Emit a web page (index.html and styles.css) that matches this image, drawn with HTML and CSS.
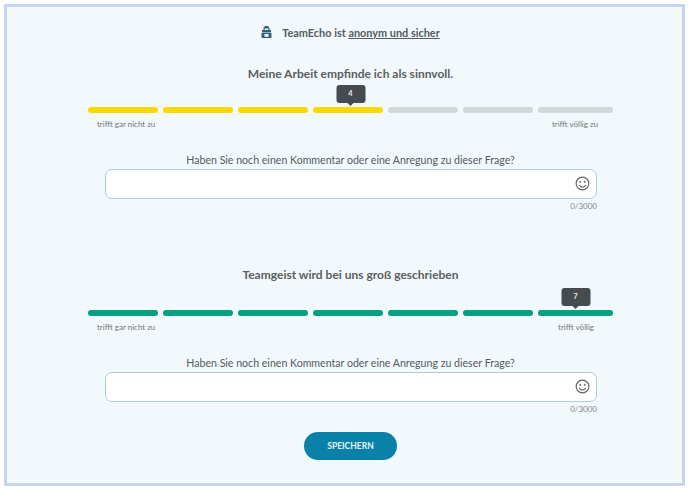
FILE: index.html
```html
<!DOCTYPE html>
<html lang="de">
<head>
<meta charset="utf-8">
<title>TeamEcho</title>
<link rel="stylesheet" href="styles.css">
</head>
<body>
<main class="frame">
  <p class="notice">
    <svg class="lock" viewBox="0 0 11 12" width="11" height="12"><path fill="#2f5f7c" d="M3.500 0h4v1.200l1 .8V4H10v2.500H1V4h1.500V2l1-.8zM3.700 2.400V4h3.600V2.400zM.5 7h10v4.200a.8.8 0 0 1-.8.8H1.300a.8.8 0 0 1-.8-.8zM3.500 8v2.800h4V8z"/></svg>
    <span>TeamEcho ist <a href="#">anonym und sicher</a></span>
  </p>

  <section class="question">
    <h2>Meine Arbeit empfinde ich als sinnvoll.</h2>
    <div class="scale">
      <div class="seg on-y"></div><div class="seg on-y"></div><div class="seg on-y"></div>
      <div class="seg on-y"><span class="tip shift">4</span></div>
      <div class="seg"></div><div class="seg"></div><div class="seg last"></div>
    </div>
    <div class="labels"><span>trifft gar nicht zu</span><span class="end-a">trifft völlig zu</span></div>
    <label class="ask">Haben Sie noch einen Kommentar oder eine Anregung zu dieser Frage?</label>
    <div class="field">
      <svg class="smile" viewBox="0 0 16 16" width="15" height="15"><circle cx="8" cy="8" r="6.800" fill="none" stroke="#5f6466" stroke-width="1.200"/><circle cx="5.600" cy="6.300" r="1" fill="#5f6466"/><circle cx="10.400" cy="6.300" r="1" fill="#5f6466"/><path d="M4.500 9.600c.8 1.500 2 2.200 3.500 2.200s2.700-.7 3.500-2.200" fill="none" stroke="#5f6466" stroke-width="1.200"/></svg>
    </div>
    <div class="count">0/3000</div>
  </section>

  <section class="question second">
    <h2>Teamgeist wird bei uns groß geschrieben</h2>
    <div class="scale">
      <div class="seg on-g"></div><div class="seg on-g"></div><div class="seg on-g"></div>
      <div class="seg on-g"></div><div class="seg on-g"></div><div class="seg on-g"></div>
      <div class="seg on-g last"><span class="tip">7</span></div>
    </div>
    <div class="labels"><span>trifft gar nicht zu</span><span>trifft völlig</span></div>
    <label class="ask">Haben Sie noch einen Kommentar oder eine Anregung zu dieser Frage?</label>
    <div class="field">
      <svg class="smile" viewBox="0 0 16 16" width="15" height="15"><circle cx="8" cy="8" r="6.800" fill="none" stroke="#5f6466" stroke-width="1.200"/><circle cx="5.600" cy="6.300" r="1" fill="#5f6466"/><circle cx="10.400" cy="6.300" r="1" fill="#5f6466"/><path d="M4.500 9.600c.8 1.500 2 2.200 3.500 2.200s2.700-.7 3.500-2.200" fill="none" stroke="#5f6466" stroke-width="1.200"/></svg>
    </div>
    <div class="count">0/3000</div>
  </section>

  <div class="actions"><button type="button">SPEICHERN</button></div>
</main>
</body>
</html>
```

FILE: styles.css
```css
* { box-sizing: border-box; }
html, body { margin: 0; height: 100%; background: #fff; }
body { padding: 4px 3px 3px 4px; font-family: "Lato", "Noto Sans", sans-serif; color: #555b5e; }
.frame { width: 681px; height: 482px; border: 3px solid #c6d5ee; background: #f1f9fc; padding: 0 69px 0 81px; }
.notice { margin: 0; padding-top: 12px; height: 38px; display: flex; justify-content: center; align-items: center; gap: 10px; font-size: 10.900px; font-weight: 700; }
.notice a { color: inherit; }
.lock { flex: none; }
h2 { margin: 0; text-align: center; font-size: 12px; line-height: 16px; font-weight: 700; color: #5a5e60; }
.question { padding-top: 21px; }
.question.second { padding-top: 55px; }
.scale { display: flex; gap: 5px; margin-top: 25px; }
.second .scale { margin-top: 27px; }
.seg { position: relative; flex: none; width: 70px; height: 6px; border-radius: 3px; background: #d2d7da; }
.seg.last { width: 75px; }
.on-y { background: #fad900; }
.on-g { background: #04a084; }
.tip { position: absolute; left: 50%; bottom: 10px; transform: translateX(-50%); width: 29px; height: 18px; border-radius: 3px; background: #454b4f; color: #e8e8e8; font-size: 7.500px; font-weight: 700; line-height: 18px; text-align: center; }
.tip.shift { margin-left: 2.500px; }
.tip::after { content: ""; position: absolute; left: 50%; top: 100%; margin-left: -3px; border: 3px solid transparent; border-bottom: 0; border-top-color: #454b4f; }
.labels { display: flex; justify-content: space-between; margin-top: 6px; padding: 0 19px 0 9px; font-size: 8px; line-height: 11px; color: #6f7579; }
.labels .end-a { margin-right: -4px; }
.ask { display: block; margin-top: 22px; text-align: center; font-size: 10.600px; line-height: 16px; color: #55595b; }
.field { position: relative; margin: 1px 16px 0 17px; height: 30px; background: #fff; border: 1.500px solid #a9d0d8; border-radius: 7px; }
.smile { position: absolute; right: 6px; top: 6px; }
.count { margin: 2px 16px 0 0; text-align: right; font-size: 8px; line-height: 11px; color: #80868a; }
.actions { display: flex; justify-content: center; margin-top: 17px; }
button { width: 93px; height: 28px; border: 0; border-radius: 14px; background: #0a81a8; color: #e6f4f8; font-family: inherit; font-size: 8.500px; font-weight: 700; }
```
